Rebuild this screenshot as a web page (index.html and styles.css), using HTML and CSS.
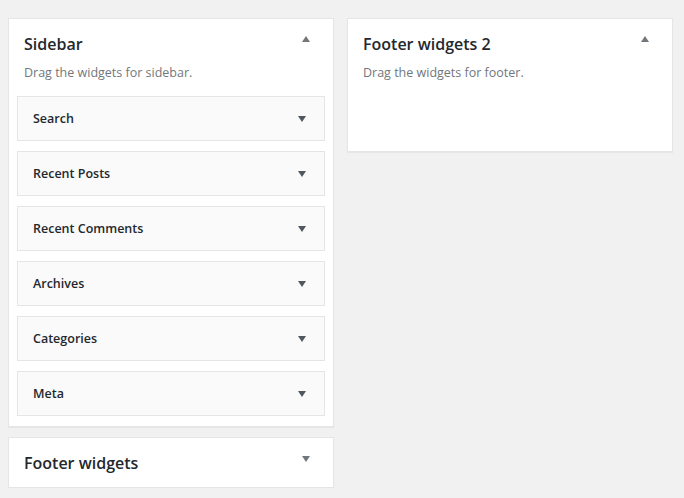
FILE: index.html
```html
<!DOCTYPE html>
<html>
<head>
<meta charset="utf-8">
<link rel="stylesheet" href="styles.css">
</head>
<body>
<div class="cols">
  <div class="col">
    <div class="card">
      <div class="head">
        <h2 class="title">Sidebar</h2>
        <span class="tri tri-up"></span>
      </div>
      <p class="desc">Drag the widgets for sidebar.</p>
      <div class="list">
        <div class="widget"><h3>Search</h3><span class="tri tri-down"></span></div>
        <div class="widget"><h3>Recent Posts</h3><span class="tri tri-down"></span></div>
        <div class="widget"><h3>Recent Comments</h3><span class="tri tri-down"></span></div>
        <div class="widget"><h3>Archives</h3><span class="tri tri-down"></span></div>
        <div class="widget"><h3>Categories</h3><span class="tri tri-down"></span></div>
        <div class="widget"><h3>Meta</h3><span class="tri tri-down"></span></div>
      </div>
    </div>
    <div class="card closed">
      <div class="head">
        <h2 class="title">Footer widgets</h2>
        <span class="tri tri-down-head"></span>
      </div>
    </div>
  </div>
  <div class="col">
    <div class="card">
      <div class="head">
        <h2 class="title">Footer widgets 2</h2>
        <span class="tri tri-up"></span>
      </div>
      <p class="desc">Drag the widgets for footer.</p>
      <div class="drop"></div>
    </div>
  </div>
</div>
</body>
</html>
```
FILE: styles.css
```css
html, body {
  margin: 0;
  padding: 0;
  background: #f1f1f1;
}
body {
  font-family: "Open Sans", "Noto Sans", sans-serif;
  color: #23282d;
  padding: 18px 8px 0 8px;
}
.cols {
  display: flex;
  gap: 13px;
  align-items: flex-start;
}
.col {
  width: 326px;
  display: flex;
  flex-direction: column;
  gap: 10px;
}
.card {
  background: #fff;
  border: 1px solid #e5e5e5;
  box-shadow: 0 1px 1px rgba(0,0,0,0.04);
}
.head {
  display: flex;
  align-items: flex-start;
  justify-content: space-between;
  padding: 15px 23px 0 15px;
}
.closed .head {
  padding-bottom: 14px;
}
.title {
  margin: 0;
  font-size: 16px;
  line-height: 20px;
  font-weight: 600;
  color: #23282d;
}
.desc {
  margin: 10px 15px 0 15px;
  font-size: 12.5px;
  line-height: 18px;
  color: #72777c;
}
.list {
  display: flex;
  flex-direction: column;
  gap: 10px;
  padding: 14px 8px 10px 8px;
}
.drop {
  height: 69px;
}
.widget {
  height: 43px;
  background: #fafafa;
  border: 1px solid #e5e5e5;
  display: flex;
  align-items: center;
  justify-content: space-between;
  padding: 0 18px 0 15px;
}
.widget h3 {
  margin: 0;
  font-size: 12.5px;
  font-weight: 600;
  color: #23282d;
}
.tri {
  width: 0;
  height: 0;
  border-left: 4px solid transparent;
  border-right: 4px solid transparent;
}
.tri-up {
  margin-top: 2px;
  border-bottom: 6px solid #72777c;
}
.tri-down-head {
  margin-top: 3px;
  border-top: 6px solid #72777c;
}
.tri-down {
  border-top: 6px solid #50575e;
}
```
